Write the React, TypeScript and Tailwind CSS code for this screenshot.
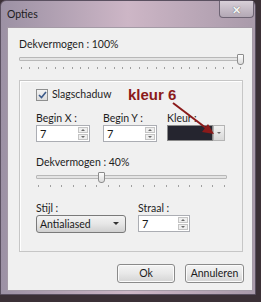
import React from 'react';

const font = { fontFamily: 'Lato, "Noto Sans", sans-serif' };

function Ticks({ count }: { count: number }) {
  return (
    <div className="flex justify-between px-[2px]">
      {Array.from({ length: count }).map((_, i) => (
        <div key={i} className="w-px h-[2px] bg-[#a0a0a0]" />
      ))}
    </div>
  );
}

function Slider({ width, pos, ticks }: { width: number; pos: number; ticks: number }) {
  return (
    <div style={{ width }}>
      <div className="relative h-[11px]">
        <div className="absolute left-0 right-0 top-[3px] h-[4px] border border-[#b8b8b8] bg-[#e4e4e4] rounded-[1px]" />
        <div
          className="absolute top-0 w-[7px] h-[11px] border border-[#8c8c8c] bg-gradient-to-b from-[#fdfdfd] to-[#dcdcdc] rounded-b-[3px] rounded-t-[1px]"
          style={{ left: pos }}
        />
      </div>
      <div className="mt-[2px]">
        <Ticks count={ticks} />
      </div>
    </div>
  );
}

function Spin({ value, width }: { value: string; width: number }) {
  return (
    <div
      className="h-[17px] flex items-center border border-[#abadb3] bg-white pl-[3px] pr-[1px]"
      style={{ width }}
    >
      <span className="flex-1 text-[11px] leading-none text-[#1a1a1a]">{value}</span>
      <div className="flex flex-col gap-px">
        <div className="w-[10px] h-[6px] border border-[#c4c4c4] bg-[#eeeeee] flex items-center justify-center">
          <div className="w-0 h-0 border-x-[2px] border-x-transparent border-b-[2px] border-b-[#6a6a6a]" />
        </div>
        <div className="w-[10px] h-[6px] border border-[#c4c4c4] bg-[#eeeeee] flex items-center justify-center">
          <div className="w-0 h-0 border-x-[2px] border-x-transparent border-t-[2px] border-t-[#6a6a6a]" />
        </div>
      </div>
    </div>
  );
}

function Button({ label, width }: { label: string; width: number }) {
  return (
    <div
      className="h-[19px] flex items-center justify-center border border-[#8a8a8a] rounded-[3px] bg-gradient-to-b from-[#f4f4f4] via-[#e8e8e8] to-[#d4d4d4] text-[10.5px] text-[#1a1a1a] shadow-[inset_0_0_0_1px_#fbfbfb]"
      style={{ width }}
    >
      {label}
    </div>
  );
}

export default function App() {
  return (
    <div className="w-[261px] h-[302px] bg-[#3b3036] overflow-hidden" style={font}>
      <div className="relative w-[256px] h-[295px] rounded-t-[6px] border border-[#5a5060] bg-gradient-to-r from-[#9c91a4] via-[#cdb6c6] to-[#a99aaa] flex flex-col">
        {/* title bar */}
        <div className="h-[26px] flex items-start justify-between pl-[6px]">
          <span className="mt-[6px] text-[10.5px] text-[#1c1c1c]">Opties</span>
          <div className="w-[35px] h-[17px] mr-[1px] border border-[#6e6474] border-t-0 rounded-b-[4px] bg-gradient-to-b from-[#d8cfd8] to-[#b3a8b5] flex items-center justify-center">
            <span className="text-[11px] font-bold text-[#f4f4f4] leading-none [text-shadow:0_0_1px_#444]">✕</span>
          </div>
        </div>

        {/* client area */}
        <div className="ml-[6px] mr-[2px] h-[264px] bg-[#f0f0f0] border border-[#a49aa6] pl-[11px] pr-[10px] pt-[9px]">
          <div className="text-[10.5px] text-[#1e1e1e] leading-[14px]">Dekvermogen : 100%</div>
          <div className="mt-[3px]">
            <Slider width={224} pos={218} ticks={27} />
          </div>

          {/* group box */}
          <div className="mt-[11px] w-[224px] h-[172px] border border-[#c6c6c6] shadow-[inset_1px_1px_0_#ffffff] pl-[16px] pt-[6px]">
            <div className="flex items-center gap-[4px]">
              <div className="w-[12px] h-[12px] border border-[#8e8f8f] bg-gradient-to-b from-[#f2f2f2] to-[#dcdcdc] flex items-center justify-center">
                <svg width="9" height="8" viewBox="0 0 9 8">
                  <path d="M1 4 L3.5 6.5 L8 1" fill="none" stroke="#3c5a8a" strokeWidth="1.6" />
                </svg>
              </div>
              <span className="text-[10.5px] text-[#1e1e1e]">Slagschaduw</span>
            </div>

            <div className="mt-[8px] flex">
              <div className="w-[67px]">
                <div className="text-[10.5px] text-[#1e1e1e] leading-[14px]">Begin X :</div>
                <Spin value="7" width={54} />
              </div>
              <div className="w-[64px]">
                <div className="text-[10.5px] text-[#1e1e1e] leading-[14px]">Begin Y :</div>
                <Spin value="7" width={54} />
              </div>
              <div>
                <div className="text-[10.5px] text-[#1e1e1e] leading-[14px]">Kleur :</div>
                <div className="flex items-center">
                  <div className="w-[46px] h-[16px] border border-[#8a8a8a] bg-[#25252f]" />
                  <div className="w-[12px] h-[16px] border border-[#b4b4b4] bg-gradient-to-b from-[#f2f2f2] to-[#d8d8d8] flex items-center justify-center">
                    <div className="w-0 h-0 border-x-[2px] border-x-transparent border-t-[2px] border-t-[#6a6a6a]" />
                  </div>
                </div>
              </div>
            </div>

            <div className="mt-[13px] text-[10.5px] text-[#1e1e1e] leading-[14px]">Dekvermogen : 40%</div>
            <div className="mt-[3px]">
              <Slider width={191} pos={62} ticks={17} />
            </div>

            <div className="mt-[14px] flex">
              <div className="w-[102px]">
                <div className="text-[10.5px] text-[#1e1e1e] leading-[14px]">Stijl :</div>
                <div className="w-[90px] h-[18px] border border-[#7a7a7a] rounded-[3px] bg-gradient-to-b from-[#f3f3f3] via-[#e6e6e6] to-[#d0d0d0] flex items-center pl-[3px] pr-[6px]">
                  <span className="flex-1 text-[10.5px] text-[#1a1a1a] leading-none">Antialiased</span>
                  <div className="w-0 h-0 border-x-[3px] border-x-transparent border-t-[3px] border-t-[#333]" />
                </div>
              </div>
              <div>
                <div className="text-[10.5px] text-[#1e1e1e] leading-[14px]">Straal :</div>
                <Spin value="7" width={52} />
              </div>
            </div>
          </div>

          {/* buttons */}
          <div className="mt-[12px] w-[225px] flex justify-end gap-[10px]">
            <Button label="Ok" width={58} />
            <Button label="Annuleren" width={59} />
          </div>
        </div>

        {/* annotation */}
        <div className="absolute left-[127px] top-[86px] text-[15px] font-bold text-[#8b1a1a] leading-none" style={{ fontFamily: '"Liberation Sans", Arial, sans-serif' }}>
          kleur 6
        </div>
        <svg className="absolute left-0 top-0" width="256" height="295" viewBox="0 0 256 295">
          <line x1="172" y1="102" x2="205" y2="127" stroke="#8b1a1a" strokeWidth="2" />
          <polygon points="213,133 201,131 207,123" fill="#8b1a1a" />
        </svg>
      </div>
    </div>
  );
}
